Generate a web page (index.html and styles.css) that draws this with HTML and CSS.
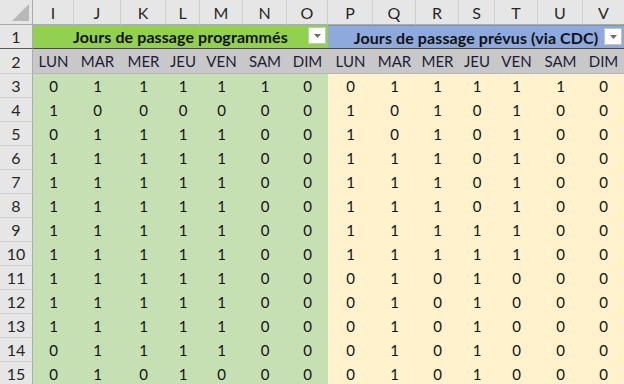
FILE: index.html
```html
<!DOCTYPE html>
<html lang="fr">
<head>
<meta charset="utf-8">
<title>Feuille</title>
<link rel="stylesheet" href="styles.css">
</head>
<body>
<div class="sheet">
  <div class="corner"><svg class="tri" width="17" height="17" viewBox="0 0 17 17"><polygon points="17,0 17,17 0,17" fill="#b8b8b8"/></svg></div>
  <div class="colh">I</div><div class="colh">J</div><div class="colh">K</div><div class="colh">L</div><div class="colh">M</div><div class="colh">N</div><div class="colh">O</div><div class="colh">P</div><div class="colh">Q</div><div class="colh">R</div><div class="colh">S</div><div class="colh">T</div><div class="colh">U</div><div class="colh last">V</div>

  <div class="rowh r1">1</div>
  <div class="title green">Jours de passage programmés<span class="dd"><svg width="7" height="4" viewBox="0 0 7 4"><polygon points="0,0 7,0 3.5,4" fill="#6b6b6b"/></svg></span></div>
  <div class="title blue">Jours de passage prévus (via CDC)<span class="dd"><svg width="7" height="4" viewBox="0 0 7 4"><polygon points="0,0 7,0 3.5,4" fill="#6b6b6b"/></svg></span></div>

  <div class="rowh">2</div>
  <div class="day">LUN</div><div class="day">MAR</div><div class="day">MER</div><div class="day">JEU</div><div class="day">VEN</div><div class="day">SAM</div><div class="day">DIM</div>
  <div class="day">LUN</div><div class="day">MAR</div><div class="day">MER</div><div class="day">JEU</div><div class="day">VEN</div><div class="day">SAM</div><div class="day">DIM</div>

  <div class="rowh">3</div>
  <div class="c g">0</div><div class="c g">1</div><div class="c g">1</div><div class="c g">1</div><div class="c g">1</div><div class="c g">1</div><div class="c g">0</div>
  <div class="c y">0</div><div class="c y">1</div><div class="c y">1</div><div class="c y">1</div><div class="c y">1</div><div class="c y">1</div><div class="c y">0</div>

  <div class="rowh">4</div>
  <div class="c g">1</div><div class="c g">0</div><div class="c g">0</div><div class="c g">0</div><div class="c g">0</div><div class="c g">0</div><div class="c g">0</div>
  <div class="c y">1</div><div class="c y">0</div><div class="c y">1</div><div class="c y">0</div><div class="c y">1</div><div class="c y">0</div><div class="c y">0</div>

  <div class="rowh">5</div>
  <div class="c g">0</div><div class="c g">1</div><div class="c g">1</div><div class="c g">1</div><div class="c g">1</div><div class="c g">0</div><div class="c g">0</div>
  <div class="c y">1</div><div class="c y">0</div><div class="c y">1</div><div class="c y">0</div><div class="c y">1</div><div class="c y">0</div><div class="c y">0</div>

  <div class="rowh">6</div>
  <div class="c g">1</div><div class="c g">1</div><div class="c g">1</div><div class="c g">1</div><div class="c g">1</div><div class="c g">0</div><div class="c g">0</div>
  <div class="c y">1</div><div class="c y">1</div><div class="c y">1</div><div class="c y">0</div><div class="c y">1</div><div class="c y">0</div><div class="c y">0</div>

  <div class="rowh">7</div>
  <div class="c g">1</div><div class="c g">1</div><div class="c g">1</div><div class="c g">1</div><div class="c g">1</div><div class="c g">0</div><div class="c g">0</div>
  <div class="c y">1</div><div class="c y">1</div><div class="c y">1</div><div class="c y">0</div><div class="c y">1</div><div class="c y">0</div><div class="c y">0</div>

  <div class="rowh">8</div>
  <div class="c g">1</div><div class="c g">1</div><div class="c g">1</div><div class="c g">1</div><div class="c g">1</div><div class="c g">0</div><div class="c g">0</div>
  <div class="c y">1</div><div class="c y">1</div><div class="c y">1</div><div class="c y">0</div><div class="c y">1</div><div class="c y">0</div><div class="c y">0</div>

  <div class="rowh">9</div>
  <div class="c g">1</div><div class="c g">1</div><div class="c g">1</div><div class="c g">1</div><div class="c g">1</div><div class="c g">0</div><div class="c g">0</div>
  <div class="c y">1</div><div class="c y">1</div><div class="c y">1</div><div class="c y">1</div><div class="c y">1</div><div class="c y">0</div><div class="c y">0</div>

  <div class="rowh">10</div>
  <div class="c g">1</div><div class="c g">1</div><div class="c g">1</div><div class="c g">1</div><div class="c g">1</div><div class="c g">0</div><div class="c g">0</div>
  <div class="c y">1</div><div class="c y">1</div><div class="c y">1</div><div class="c y">1</div><div class="c y">1</div><div class="c y">0</div><div class="c y">0</div>

  <div class="rowh">11</div>
  <div class="c g">1</div><div class="c g">1</div><div class="c g">1</div><div class="c g">1</div><div class="c g">1</div><div class="c g">0</div><div class="c g">0</div>
  <div class="c y">0</div><div class="c y">1</div><div class="c y">0</div><div class="c y">1</div><div class="c y">0</div><div class="c y">0</div><div class="c y">0</div>

  <div class="rowh">12</div>
  <div class="c g">1</div><div class="c g">1</div><div class="c g">1</div><div class="c g">1</div><div class="c g">1</div><div class="c g">0</div><div class="c g">0</div>
  <div class="c y">0</div><div class="c y">1</div><div class="c y">0</div><div class="c y">1</div><div class="c y">0</div><div class="c y">0</div><div class="c y">0</div>

  <div class="rowh">13</div>
  <div class="c g">1</div><div class="c g">1</div><div class="c g">1</div><div class="c g">1</div><div class="c g">1</div><div class="c g">0</div><div class="c g">0</div>
  <div class="c y">0</div><div class="c y">1</div><div class="c y">0</div><div class="c y">1</div><div class="c y">0</div><div class="c y">0</div><div class="c y">0</div>

  <div class="rowh">14</div>
  <div class="c g">0</div><div class="c g">1</div><div class="c g">1</div><div class="c g">1</div><div class="c g">1</div><div class="c g">0</div><div class="c g">0</div>
  <div class="c y">0</div><div class="c y">1</div><div class="c y">0</div><div class="c y">1</div><div class="c y">0</div><div class="c y">0</div><div class="c y">0</div>

  <div class="rowh">15</div>
  <div class="c g">0</div><div class="c g">1</div><div class="c g">0</div><div class="c g">1</div><div class="c g">0</div><div class="c g">0</div><div class="c g">0</div>
  <div class="c y">0</div><div class="c y">1</div><div class="c y">0</div><div class="c y">1</div><div class="c y">0</div><div class="c y">0</div><div class="c y">0</div>
</div>
</body>
</html>
```
FILE: styles.css
```css
html, body {
  margin: 0;
  padding: 0;
  background: #ffffff;
  overflow: hidden;
}

.sheet {
  display: grid;
  grid-template-columns: 33px 41px 47px 45px 34px 43px 44px 41px 45px 43px 43px 36px 43px 45px 41px;
  grid-template-rows: 25px 24px 25px repeat(13, 24px);
  width: 624px;
  font-family: Lato, "Open Sans", "Liberation Sans", sans-serif;
  font-size: 15px;
  color: #111111;
}

.sheet > div {
  box-sizing: border-box;
  display: flex;
  align-items: center;
  justify-content: center;
  white-space: nowrap;
}

.corner {
  background: #e6e6e6;
  border-right: 1px solid #ababab;
  border-bottom: 1px solid #ababab;
  justify-content: flex-end !important;
  align-items: flex-end !important;
  padding: 0 3px 3px 0;
}

.tri {
  display: block;
}

.colh {
  background: #e6e6e6;
  color: #262626;
  font-size: 16px;
  border-right: 1px solid #d0d0d0;
  border-bottom: 1px solid #ababab;
  padding-top: 1px;
}

.colh.last {
  border-right: none;
}

.rowh {
  background: #e6e6e6;
  color: #262626;
  font-size: 16px;
  border-right: 1px solid #ababab;
  border-bottom: 1px solid #d0d0d0;
}

.rowh.r1 {
  border-bottom: 1px solid #5a5a5a;
}

.title {
  grid-column: span 7;
  position: relative;
  font-weight: bold;
  font-size: 16px;
  letter-spacing: 0.1px;
  color: #111111;
  border-bottom: 1px solid #4a4a4a;
}

.title.green {
  background: #92d050;
}

.title.blue {
  background: #8eaadc;
  border-top: 1px solid #7a93c4;
}

.dd {
  position: absolute;
  right: 2px;
  top: 2px;
  width: 18px;
  height: 17px;
  box-sizing: border-box;
  background: #ffffff;
  border: 1px solid #c4c4c4;
  display: flex;
  align-items: center;
  justify-content: center;
}

.dd svg {
  display: block;
}

.day {
  background: #c8c8c8;
  color: #1c1c38;
  font-size: 15px;
  border-bottom: 1px solid #b5b5b5;
}

.c.g {
  background: #c6e0b4;
}

.c.y {
  background: #fff2cc;
}
```
